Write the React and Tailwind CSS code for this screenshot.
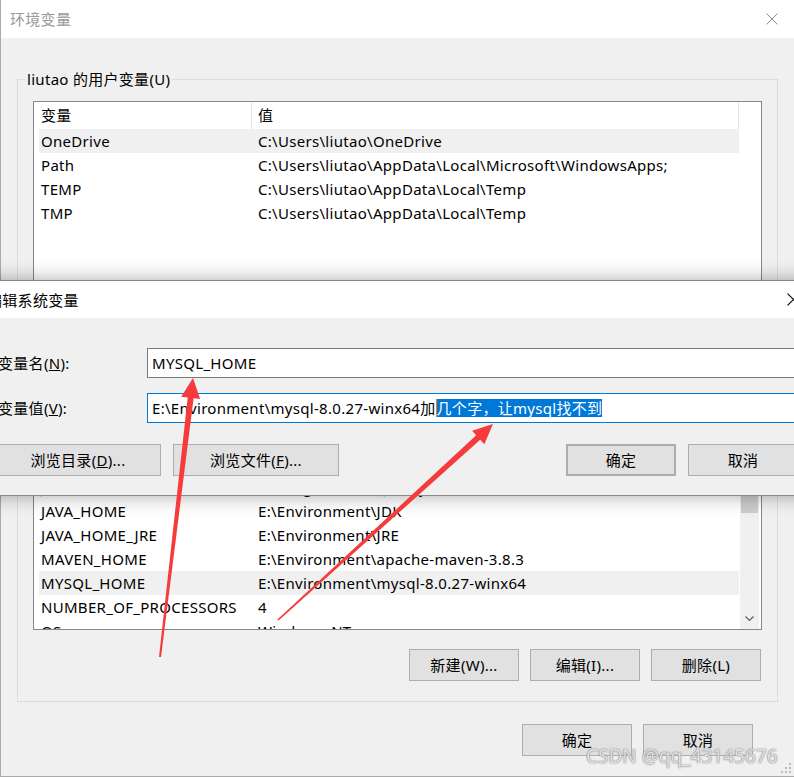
import React from 'react';

const userVars = [
  ['OneDrive', 'C:\\Users\\liutao\\OneDrive'],
  ['Path', 'C:\\Users\\liutao\\AppData\\Local\\Microsoft\\WindowsApps;'],
  ['TEMP', 'C:\\Users\\liutao\\AppData\\Local\\Temp'],
  ['TMP', 'C:\\Users\\liutao\\AppData\\Local\\Temp'],
];

const systemVars = [
  ['CLASSPATH', '.;%JAVA_HOME%\\lib;%JAVA_HOME%\\lib\\tools.jar'],
  ['ComSpec', 'C:\\Windows\\system32\\cmd.exe'],
  ['DriverData', 'C:\\Windows\\System32\\Drivers\\DriverData'],
  ['ERLANG_HOME', 'E:\\Environment\\erl-24.1'],
  ['JAVA_HOME_8', 'C:\\Program Files\\Java\\jdk1.8.0_301'],
  ['JAVA_HOME', 'E:\\Environment\\JDK'],
  ['JAVA_HOME_JRE', 'E:\\Environment\\JRE'],
  ['MAVEN_HOME', 'E:\\Environment\\apache-maven-3.8.3'],
  ['MYSQL_HOME', 'E:\\Environment\\mysql-8.0.27-winx64'],
  ['NUMBER_OF_PROCESSORS', '4'],
  ['OS', 'Windows_NT'],
];

const CloseIcon = ({ color, size }) => (
  <svg width={size} height={size} viewBox="0 0 12 12" className="block">
    <path d="M0.5 0.5 L11.5 11.5 M11.5 0.5 L0.5 11.5" stroke={color} strokeWidth="1" fill="none" />
  </svg>
);

const WinButton = ({ children, className = '' }) => (
  <div className={`flex h-[32px] w-[110px] items-center justify-center border border-[#adadad] bg-[#e1e1e1] leading-[20px] ${className}`}>
    {children}
  </div>
);

const VarList = ({ rows, selected, className, scrollbar }) => (
  <div className={`flex overflow-hidden border border-[#828790] bg-white ${className}`}>
    <div className="w-[705px] shrink-0 pl-[5px]">
      <div className="flex h-[27px] items-center">
        <div className="flex h-full w-[213px] items-center border-r border-[#e5e5e5] pl-[2px]">变量</div>
        <div className="flex h-full w-[487px] items-center border-r border-[#e5e5e5] pl-[6px]">值</div>
      </div>
      {rows.map(([name, value], i) => (
        <div key={name} className={`flex h-[24px] items-center whitespace-nowrap ${i === selected ? 'bg-[#f0f0f0]' : ''}`}>
          <div className="w-[213px] shrink-0 pl-[2px]">{name}</div>
          <div className="pl-[6px]">{value}</div>
        </div>
      ))}
    </div>
    {scrollbar && (
      <div className="ml-[1px] flex w-[19px] flex-col bg-[#f0f0f0]">
        <div className="h-[21px] shrink-0" />
        <div className="mx-[1px] mt-[57px] h-[83px] shrink-0 bg-[#cdcdcd]" />
        <div className="flex-1" />
        <div className="flex h-[21px] shrink-0 items-center justify-center">
          <svg width="9" height="6" viewBox="0 0 9 6">
            <path d="M0.5 0.5 L4.5 4.5 L8.5 0.5" stroke="#606060" strokeWidth="1.2" fill="none" />
          </svg>
        </div>
      </div>
    )}
  </div>
);

export default function App() {
  return (
    <div className="relative h-[777px] w-[794px] overflow-hidden bg-[#f0f0f0] font-['Noto_Sans','Noto_Sans_CJK_SC',sans-serif] text-[15px] tracking-[0.3px] text-black">
      {/* 环境变量 main window */}
      <div className="flex h-full flex-col border-b border-l border-[#aaaaaa]">
        <div className="flex h-[38px] shrink-0 items-center justify-between bg-white pl-[9px] pr-[16px] text-[#999999]">
          <span className="leading-[20px]">环境变量</span>
          <CloseIcon color="#8a8a8a" size={12} />
        </div>

        <div className="flex flex-1 flex-col px-[16px] pt-[31px]">
          <fieldset className="border border-[#dcdcdc] pb-[16px] pl-[7px] pr-[15px]">
            <legend className="px-[2px] leading-[20px]">liutao 的用户变量(U)</legend>
            <VarList rows={userVars} selected={0} className="ml-[8px] mt-[12px] h-[184px]" />
          </fieldset>

          <fieldset className="mt-[17px] border border-[#dcdcdc] pb-[20px] pl-[7px] pr-[15px]">
            <legend className="px-[2px] leading-[20px]">系统变量(S)</legend>
            <VarList rows={systemVars} selected={8} scrollbar className="ml-[8px] mt-[12px] h-[279px]" />
            <div className="mt-[19px] flex justify-end gap-[11px] pr-[1px]">
              <WinButton>新建(W)...</WinButton>
              <WinButton>编辑(I)...</WinButton>
              <WinButton>删除(L)</WinButton>
            </div>
          </fieldset>

          <div className="mr-[25px] mt-[22px] flex justify-end gap-[11px]">
            <WinButton>确定</WinButton>
            <WinButton>取消</WinButton>
          </div>
        </div>
      </div>

      {/* 编辑系统变量 dialog */}
      <div className="absolute left-[-23px] top-[280px] w-[840px] border border-[#888888] bg-[#f0f0f0] shadow-[0_0_18px_rgba(0,0,0,0.35)]">
        <div className="flex h-[37px] items-center justify-between bg-white pl-[9px] pr-[16px]">
          <span className="leading-[20px]">编辑系统变量</span>
          <CloseIcon color="#000000" size={13} />
        </div>
        <div className="flex flex-col pb-[19px] pt-[30px]">
          <div className="flex h-[30px] items-center pl-[20px] pr-[20px]">
            <div className="w-[149px] shrink-0 leading-[20px]">
              变量名(<span className="underline">N</span>):
            </div>
            <div className="flex h-full flex-1 items-center border border-[#7a7a7a] bg-white pl-[4px] leading-[20px]">
              MYSQL_HOME
            </div>
          </div>
          <div className="mt-[15px] flex h-[30px] items-center pl-[20px] pr-[20px]">
            <div className="w-[149px] shrink-0 leading-[20px]">
              变量值(<span className="underline">V</span>):
            </div>
            <div className="flex h-full flex-1 items-center whitespace-nowrap border border-[#0078d7] bg-white pl-[4px] leading-[20px]">
              <span>E:\Environment\mysql-8.0.27-winx64加</span>
              <span className="inline-block h-[18px] border-l border-[#f07d1a] bg-[#0078d7] leading-[18px] text-white">
                几个字，让mysql找不到
              </span>
            </div>
          </div>
          <div className="mt-[21px] flex items-center pl-[17px] pr-[18px]">
            <WinButton className="w-[166px]">
              浏览目录(<span className="underline">D</span>)...
            </WinButton>
            <WinButton className="ml-[12px] w-[166px]">
              浏览文件(<span className="underline">F</span>)...
            </WinButton>
            <WinButton className="ml-auto border-2 border-[#0078d7]">确定</WinButton>
            <WinButton className="ml-[12px]">取消</WinButton>
          </div>
        </div>
      </div>

      {/* red annotation arrows */}
      <svg className="pointer-events-none absolute left-0 top-0" width="794" height="777" viewBox="0 0 794 777">
        <polygon
          fill="#f53b3b"
          points="159,656.9 187.7,397.5 181.2,396.7 193,378 200.1,399 193.6,398.2 161,657.1"
        />
        <polygon
          fill="#f53b3b"
          points="277.4,619.4 476.2,435.3 472.1,430.8 493,424 484.3,444.2 480.2,439.7 278.6,620.6"
        />
      </svg>

      {/* resize grip */}
      <svg className="absolute bottom-[4px] right-[3px]" width="10" height="10" viewBox="0 0 10 10">
        <rect x="8" y="0" width="2" height="2" fill="#bbbbbb" />
        <rect x="4" y="4" width="2" height="2" fill="#bbbbbb" />
        <rect x="8" y="4" width="2" height="2" fill="#bbbbbb" />
        <rect x="0" y="8" width="2" height="2" fill="#bbbbbb" />
        <rect x="4" y="8" width="2" height="2" fill="#bbbbbb" />
        <rect x="8" y="8" width="2" height="2" fill="#bbbbbb" />
      </svg>

      {/* watermark */}
      <div className="pointer-events-none absolute left-[586px] top-[744px] text-[19px] leading-[24px] tracking-normal text-[#e2e2e2] [text-shadow:0_0_1px_#6a6a6a,0_0_2px_#a0a0a0]">
        CSDN @qq_43145676
      </div>
    </div>
  );
}
